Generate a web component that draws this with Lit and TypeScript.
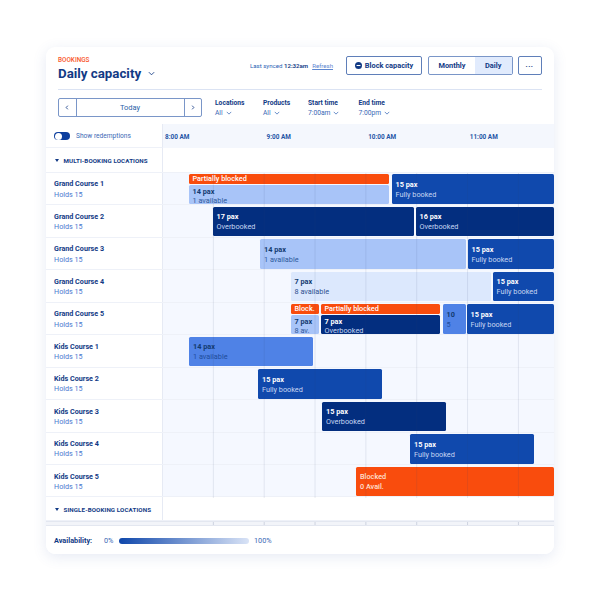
import { LitElement, html, css, svg } from "lit";
import { customElement } from "lit/decorators.js";

type Kind = "orange" | "pale" | "light" | "mid" | "blue" | "navy";
interface Bar { x: number; w: number; kind: Kind; a: string; b?: string; slim?: boolean; low?: boolean; }
interface Row { name: string; bars: Bar[]; }

const T0 = 163;
const rows: Row[] = [
  { name: "Grand Course 1", bars: [
    { x: 189, w: 200, kind: "orange", a: "Partially blocked", slim: true },
    { x: 189, w: 200, kind: "light", a: "14 pax", b: "1 available", low: true },
    { x: 392, w: 162, kind: "blue", a: "15 pax", b: "Fully booked" } ] },
  { name: "Grand Course 2", bars: [
    { x: 213, w: 201.5, kind: "navy", a: "17 pax", b: "Overbooked" },
    { x: 416, w: 138, kind: "navy", a: "16 pax", b: "Overbooked" } ] },
  { name: "Grand Course 3", bars: [
    { x: 260.5, w: 206, kind: "light", a: "14 pax", b: "1 available" },
    { x: 468, w: 86, kind: "blue", a: "15 pax", b: "Fully booked" } ] },
  { name: "Grand Course 4", bars: [
    { x: 291, w: 200, kind: "pale", a: "7 pax", b: "8 available" },
    { x: 493, w: 61, kind: "blue", a: "15 pax", b: "Fully booked" } ] },
  { name: "Grand Course 5", bars: [
    { x: 291, w: 28.5, kind: "orange", a: "Block.", slim: true },
    { x: 291, w: 28.5, kind: "light", a: "7 pax", b: "8 av.", low: true },
    { x: 321, w: 119, kind: "orange", a: "Partially blocked", slim: true },
    { x: 321, w: 119, kind: "navy", a: "7 pax", b: "Overbooked", low: true },
    { x: 443, w: 23, kind: "mid", a: "10", b: "5" },
    { x: 467, w: 87, kind: "blue", a: "15 pax", b: "Fully booked" } ] },
  { name: "Kids Course 1", bars: [{ x: 189.5, w: 124, kind: "mid", a: "14 pax", b: "1 available" }] },
  { name: "Kids Course 2", bars: [{ x: 258.5, w: 124, kind: "blue", a: "15 pax", b: "Fully booked" }] },
  { name: "Kids Course 3", bars: [{ x: 322.5, w: 124, kind: "navy", a: "15 pax", b: "Overbooked" }] },
  { name: "Kids Course 4", bars: [{ x: 410.5, w: 124, kind: "blue", a: "15 pax", b: "Fully booked" }] },
  { name: "Kids Course 5", bars: [{ x: 356.5, w: 197.5, kind: "orange", a: "Blocked", b: "0 Avail." }] },
];

const chevron = svg`<svg class="chev" viewBox="0 0 8 5" width="6" height="4"><path d="M1 1l3 3 3-3" fill="none" stroke="currentColor" stroke-width="1"/></svg>`;

@customElement("app-root")
export class AppRoot extends LitElement {
  static styles = css`
    :host { display: block; width: 600px; height: 600px; box-sizing: border-box; padding: 47px 46px 46px;
      background: #fff; font-family: Roboto, "Liberation Sans", sans-serif; color: #123a85; font-size: 7px; }
    * { box-sizing: border-box; }
    .card { height: 507px; border-radius: 9px; background: #fff; display: flex; flex-direction: column; overflow: hidden;
      box-shadow: 0 3px 14px rgba(60, 90, 170, .13); }
    .top { height: 77px; padding: 8px 12.5px 0 12px; flex: none; }
    .head { height: 35px; display: flex; align-items: flex-start; border-bottom: 1px solid #dbe3f3; }
    .eyebrow { color: #f9562a; font-size: 6.4px; font-weight: 500; line-height: 7px; margin-top: 1.5px; text-transform: uppercase; }
    .title { display: flex; align-items: center; font-size: 13.3px; font-weight: 700; line-height: 17px; margin-top: 1px; }
    .title .chev { margin-left: 7px; width: 7px; height: 5px; }
    .synced { margin-left: auto; display: flex; gap: 4px; font-size: 6.1px; line-height: 19px; margin-top: 1px; color: #2a5fb5; margin-right: 13px; }
    .synced b { color: #123a85; font-weight: 600; }
    .synced u { color: #5c86d0; }
    .btn { height: 19px; margin-top: 1px; border: 1px solid #5f7fb9; border-radius: 2px; background: #fff; display: flex; align-items: center; justify-content: center;
      font-size: 7.4px; font-weight: 700; color: #123a85; }
    .block { width: 76px; gap: 3px; margin-right: 6px; }
    .seg { width: 84.5px; margin-right: 5px; display: flex; align-items: stretch; border: 1px solid #7a96c8; border-radius: 2px; padding: 0; }
    .seg span { display: flex; align-items: center; justify-content: center; }
    .seg span:first-child { flex: 1; }
    .seg span:last-child { width: 36.5px; background: #e1ebfd; }
    .more { width: 24px; letter-spacing: .5px; line-height: 1; padding-bottom: 2px; }
    .controls { display: flex; align-items: flex-start; margin-top: 8px; }
    .nav { width: 144px; height: 18.5px; display: flex; border: 1px solid #7a96c8; border-radius: 2px; margin-right: 13px; }
    .nav span { display: flex; align-items: center; justify-content: center; }
    .nav .arrow { width: 16.5px; }
    .nav .today { flex: 1; border-left: 1px solid #7a96c8; border-right: 1px solid #7a96c8; font-size: 7.5px; color: #2a5fa8; }
    .filter { line-height: 10px; font-size: 6.7px; margin-top: -.5px; }
    .filter b { display: block; font-weight: 700; }
    .filter span { display: flex; gap: 3px; align-items: center; color: #3a68b5; }
    .f1 { width: 48px; } .f2 { width: 45px; } .f3 { width: 50.5px; }
    .grid { flex: 1; display: flex; flex-direction: column; min-height: 0; position: relative; }
    .line { display: flex; }
    .side { width: 116.5px; flex: none; border-right: 1px solid #e6eaf4; background: #fff; }
    .timehead { height: 24px; }
    .timehead .side { display: flex; align-items: center; gap: 6px; padding: 1.5px 0 0 8px; font-size: 6.6px; color: #3a68b5; border-bottom: 1px solid #eef1f8; }
    .toggle { width: 16px; height: 8.5px; border-radius: 5px; background: #0e3f9e; position: relative; }
    .toggle::after { content: ""; position: absolute; left: .8px; top: .8px; width: 7px; height: 7px; border-radius: 50%; background: #fff; }
    .times { flex: 1; background: #f4f7fd; display: grid; grid-template-columns: repeat(4, 101.6px); padding: 1.5px 0 0 2.5px; align-items: center; font-size: 6.4px; font-weight: 700; color: #2455a6; }
    .section { height: 25px; border-bottom: 1px solid #eef1f8; }
    .section .side { display: flex; align-items: center; gap: 4px; padding: 1.5px 0 0 8.5px; font-size: 6.2px; font-weight: 700; letter-spacing: .1px; text-transform: uppercase; }
    .tri { width: 0; height: 0; border-left: 2.5px solid transparent; border-right: 2.5px solid transparent; border-top: 3px solid #123a85; margin-right: 1px; }
    .rest { flex: 1; background: #fff; }
    .row { height: 32.5px; border-bottom: 1px solid #eef1f8; }
    .row .side { padding: 6.5px 0 0 8px; line-height: 10.3px; }
    .name { font-weight: 700; font-size: 7.2px; }
    .holds { color: #4a78cf; font-size: 7.2px; }
    .track { flex: 1; position: relative; background: #f5f8ff; }
    .bar { position: absolute; border-radius: 1.5px; padding: 1.5px 4px 0; overflow: hidden; white-space: nowrap; display: flex; flex-direction: column; justify-content: center; line-height: 10px; font-size: 7.3px; color: #fff; top: 1.5px; height: 29.5px; }
    .bar b { font-weight: 700; }
    .bar.slim { top: 1px; height: 10.5px; font-weight: 500; padding-top: .5px; }
    .bar.low { top: 12.5px; height: 19px; line-height: 9px; }
    .orange { background: #f94c0d; color: #fff; }
    .orange b, .orange span { color: #ffe0d2; font-weight: 500 !important; }
    .pale { background: #dce8fd; color: #2c5190; }
    .pale b, .light b, .mid b { color: #123a70; }
    .light { background: #a8c4f8; color: #2f5a9c; }
    .mid { background: #4f82e6; color: #1f4d9c; }
    .blue { background: #1049ad; }
    .navy { background: #032e7f; }
    .blue span, .navy span { color: #c6d6f3; }
    .overlay { position: absolute; left: 116.5px; right: 0; top: 49px; bottom: 27px; pointer-events: none;
      background-image: linear-gradient(90deg, transparent 50px, rgba(40, 60, 110, .1) 50px, rgba(40, 60, 110, .1) 51px);
      background-size: 50.85px 100%; }
    .sec2 { height: 24px; }
    .strip { height: 3.5px; background: #f2f4f9; border-top: 1px solid #e3e7f0; padding-left: 116.5px; }
    .strip div { height: 100%; background-image: linear-gradient(90deg, transparent 50px, rgba(40, 60, 110, .18) 50px, rgba(40, 60, 110, .18) 51px);
      background-size: 50.85px 100%; }
    .foot { height: 29px; flex: none; border-top: 1px solid #e3e7f0; background: #fff; display: flex; align-items: center; padding: 1px 0 0 8px; font-size: 7.3px; }
    .foot b { font-weight: 700; width: 50px; }
    .foot i { font-style: normal; color: #3a68b5; }
    .grad { width: 129.5px; height: 6px; border-radius: 3px; margin: 0 5px 0 6px; background: linear-gradient(90deg, #0f47ab 0%, #d9e3f6 100%); }
  `;

  private bar(b: Bar) {
    const cls = `bar ${b.kind}${b.slim ? " slim" : ""}${b.low ? " low" : ""}`;
    return html`<div class=${cls} style="left:${b.x - T0}px;width:${b.w}px">
      ${b.b ? html`<b>${b.a}</b><span>${b.b}</span>` : b.a}
    </div>`;
  }

  render() {
    return html`<div class="card">
      <div class="top">
        <div class="head">
          <div>
            <div class="eyebrow">Bookings</div>
            <div class="title">Daily capacity ${chevron}</div>
          </div>
          <div class="synced"><span>Last synced <b>12:32am</b></span><u>Refresh</u></div>
          <div class="btn block">
            <svg width="7" height="7" viewBox="0 0 8 8"><circle cx="4" cy="4" r="4" fill="#123a85"/><rect x="1.8" y="3.4" width="4.4" height="1.2" fill="#fff"/></svg>
            Block capacity
          </div>
          <div class="btn seg"><span>Monthly</span><span>Daily</span></div>
          <div class="btn more">...</div>
        </div>
        <div class="controls">
          <div class="nav">
            <span class="arrow"><svg width="4" height="5" viewBox="0 0 4 6"><path d="M3 .8L1 3l2 2.2" fill="none" stroke="#123a85" stroke-width="1"/></svg></span>
            <span class="today">Today</span>
            <span class="arrow"><svg width="4" height="5" viewBox="0 0 4 6"><path d="M1 .8L3 3 1 5.2" fill="none" stroke="#123a85" stroke-width="1"/></svg></span>
          </div>
          <div class="filter f1"><b>Locations</b><span>All ${chevron}</span></div>
          <div class="filter f2"><b>Products</b><span>All ${chevron}</span></div>
          <div class="filter f3"><b>Start time</b><span>7:00am ${chevron}</span></div>
          <div class="filter"><b>End time</b><span>7:00pm ${chevron}</span></div>
        </div>
      </div>
      <div class="grid">
        <div class="line timehead">
          <div class="side"><div class="toggle"></div>Show redemptions</div>
          <div class="times"><span>8:00 AM</span><span>9:00 AM</span><span>10:00 AM</span><span>11:00 AM</span></div>
        </div>
        <div class="line section">
          <div class="side"><div class="tri"></div>Multi-booking locations</div>
          <div class="rest"></div>
        </div>
        ${rows.map(r => html`<div class="line row">
          <div class="side"><div class="name">${r.name}</div><div class="holds">Holds 15</div></div>
          <div class="track">${r.bars.map(b => this.bar(b))}</div>
        </div>`)}
        <div class="line section sec2">
          <div class="side"><div class="tri"></div>Single-booking locations</div>
          <div class="rest"></div>
        </div>
        <div class="strip"><div></div></div>
        <div class="overlay"></div>
      </div>
      <div class="foot"><b>Availability:</b><i>0%</i><div class="grad"></div><i>100%</i></div>
    </div>`;
  }
}
